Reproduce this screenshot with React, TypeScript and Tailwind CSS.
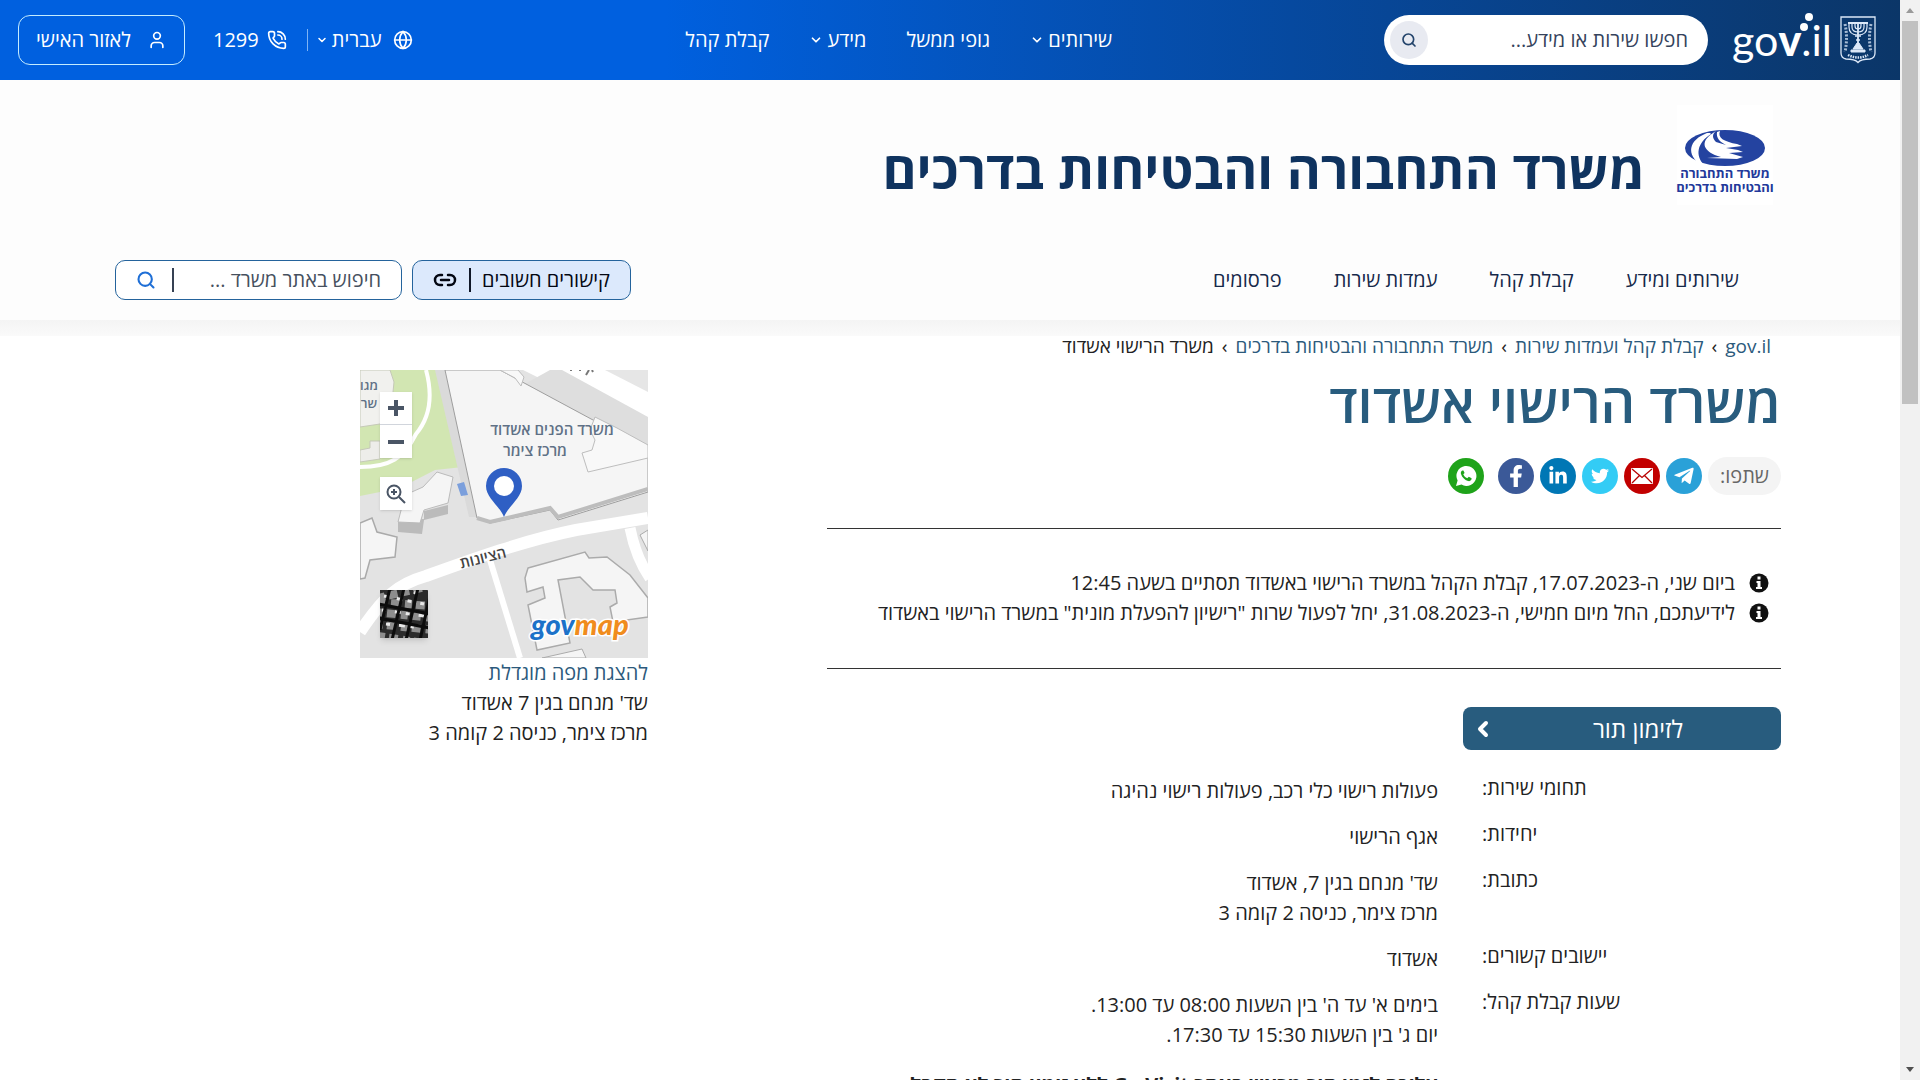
import type { ReactNode } from "react";
import { ChevronDown, ChevronLeft, Globe, Link2, PhoneCall, Search, User } from "lucide-react";
import { FaFacebookF, FaLinkedinIn, FaTelegramPlane, FaTwitter } from "react-icons/fa";
import clsx from "clsx";

const mainNav = [
  { label: "שירותים", hasMenu: true },
  { label: "גופי ממשל", hasMenu: false },
  { label: "מידע", hasMenu: true },
  { label: "קבלת קהל", hasMenu: false }
];

const officeNav = ["שירותים ומידע", "קבלת קהל", "עמדות שירות", "פרסומים"];

const breadcrumbs = ["gov.il", "קבלת קהל ועמדות שירות", "משרד התחבורה והבטיחות בדרכים"];

const notices = [
  "ביום שני, ה-17.07.2023, קבלת הקהל במשרד הרישוי באשדוד תסתיים בשעה 12:45",
  'לידיעתכם, החל מיום חמישי, ה-31.08.2023, יחל לפעול שרות "רישיון להפעלת מונית" במשרד הרישוי באשדוד'
];

const details = [
  { label: "תחומי שירות:", lines: ["פעולות רישוי כלי רכב, פעולות רישוי נהיגה"] },
  { label: "יחידות:", lines: ["אגף הרישוי"] },
  { label: "כתובת:", lines: ["שד' מנחם בגין 7, אשדוד", "מרכז צימר, כניסה 2 קומה 3"] },
  { label: "יישובים קשורים:", lines: ["אשדוד"] },
  {
    label: "שעות קבלת קהל:",
    lines: ["בימים א' עד ה' בין השעות 08:00 עד 13:00.", "יום ג' בין השעות 15:30 עד 17:30."]
  }
];

function MailIcon() {
  return (
    <svg viewBox="0 0 22 16" className="h-4 w-[22px]" fill="none" aria-hidden="true">
      <rect width="22" height="16" rx="1" fill="#fff" />
      <path d="M1 1l10 8.5L21 1M1 15l7.5-7.5M21 15l-7.5-7.5" stroke="#b80000" strokeWidth="1.3" />
    </svg>
  );
}

function WhatsappIcon() {
  return (
    <svg viewBox="0 0 24 24" className="h-6 w-6" aria-hidden="true">
      <path d="M2 22l1.600-5.400A10 10 0 1 1 7.500 20.600z" fill="#fff" />
      <path
        d="M8.500 6.500c-1.500.5-2 2-1.500 3.500 1.200 3.500 3.500 5.800 7 7 1.500.5 3-.2 3.500-1.700l.1-1-2.800-1.500-1.500 1.500c-2-.8-3.200-2-4-4l1.300-1.400-1.200-2.500z"
        fill="#1fa31a"
      />
    </svg>
  );
}

const shareLinks: { name: string; color: string; icon: ReactNode }[] = [
  { name: "טלגרם", color: "bg-[#2aa1d8]", icon: <FaTelegramPlane className="h-[22px] w-[22px]" /> },
  { name: "דואר אלקטרוני", color: "bg-[#c20000]", icon: <MailIcon /> },
  { name: "טוויטר", color: "bg-[#33ccf5]", icon: <FaTwitter className="h-[18px] w-[18px]" /> },
  { name: "לינקדאין", color: "bg-[#0077b5]", icon: <FaLinkedinIn className="h-5 w-5" /> },
  { name: "פייסבוק", color: "bg-[#3b5998]", icon: <FaFacebookF className="h-[22px] w-[22px]" /> },
  { name: "וואטסאפ", color: "bg-[#1fa31a] ms-2", icon: <WhatsappIcon /> }
];

function GovLogo() {
  return (
    <svg viewBox="0 0 100 62" className="h-[62px] w-[100px]" role="img" aria-label="gov.il">
      <g fill="#fff" fontFamily="Lato, sans-serif" fontSize="43">
        <text x="0" y="47" direction="ltr">
          go<tspan fontWeight="900">v</tspan>.il
        </text>
      </g>
      <circle cx="72" cy="18" r="4" fill="#fff" />
      <circle cx="77" cy="8" r="4" fill="#fff" />
    </svg>
  );
}

function StateEmblem() {
  return (
    <svg viewBox="0 0 36 48" className="h-12 w-9" fill="none" stroke="#dce8f8" aria-hidden="true">
      <path d="M1 1h34v36q0 5-5 6-9 0-12 3.500-3-3.500-12-3.500-5-1-5-6z" strokeWidth="1.300" />
      <path d="M9 8v3q0 8 9 8t9-8V8M12 8v3q0 5 6 5t6-5V8M15 8v2q0 3 3 3t3-3V8" strokeWidth="1.200" />
      <path d="M18 7v20M8 7h20" strokeWidth="1.800" />
      <path d="M15 20h6M16 24h4" strokeWidth="1.500" />
      <path d="M17 27l-4 6h10l-4-6zM11 34h14v2H11z" fill="#dce8f8" strokeWidth="1" />
      <path d="M5 8q3 14 0 28M31 8q-3 14 0 28" strokeWidth="3" strokeDasharray="2 1.500" opacity=".75" />
      <path d="M8 39q10 5 20 0" strokeWidth="2.500" strokeDasharray="1.500 1" />
    </svg>
  );
}

function MinistryLogo() {
  return (
    <div className="flex h-[100px] w-24 shrink-0 flex-col items-center bg-white pt-[25px] font-bold text-[#23399a]">
      <svg viewBox="0 0 80 36" className="h-9 w-20" aria-hidden="true">
        <ellipse cx="40" cy="18" rx="40" ry="18" fill="#2443a0" />
        <path
          d="M22 3C4 10 0 24 17 36l2-1C10 25 12 13 26 4l-1-1zM28 3C14 12 18 22 36 27l-14 1 30 1 6-2-14-4 14-1-5-2-12-2 16-2-5-2c-12-2-20-6-17-13l-3 1c-1 6 3 10 9 13l-10-3c-4-4-4-8 0-11z"
          fill="#fff"
        />
      </svg>
      <p className="text-center text-[13px] leading-[14px] whitespace-nowrap">
        משרד התחבורה
        <br />
        והבטיחות בדרכים
      </p>
    </div>
  );
}

function SiteHeader() {
  return (
    <header className="flex h-20 items-center justify-between bg-linear-to-l from-[#0b3668] via-[#06499f] via-32% to-[#0060df] to-65% px-[18px] text-xl text-white">
      <div className="flex items-center gap-6">
        <a href="#home" className="flex items-center gap-2 ps-1.5">
          <StateEmblem />
          <GovLogo />
        </a>
        <form className="flex h-[50px] w-[324px] items-center rounded-full bg-white ps-5 pe-1.5">
          <input
            type="search"
            aria-label="חיפוש באתר"
            placeholder="חפשו שירות או מידע..."
            className="min-w-0 flex-1 text-gray-800 outline-none placeholder:text-[#35435c]"
          />
          <button
            type="button"
            aria-label="חיפוש"
            className="grid h-[38px] w-[38px] place-items-center rounded-full bg-[#e8eaf1] text-[#24446b]"
          >
            <Search className="h-4 w-4" strokeWidth={2.5} aria-hidden="true" />
          </button>
        </form>
      </div>

      <nav aria-label="ניווט ראשי" className="flex items-center gap-10">
        {mainNav.map((item) => (
          <a key={item.label} href="#nav" className="flex items-center gap-1 font-medium whitespace-nowrap">
            {item.label}
            {item.hasMenu ? <ChevronDown className="h-3.5 w-3.5" strokeWidth={3} aria-hidden="true" /> : null}
          </a>
        ))}
      </nav>

      <div className="flex items-center font-medium">
        <button type="button" className="flex items-center">
          <Globe className="h-5 w-5" aria-hidden="true" />
          <span className="ms-3">עברית</span>
          <ChevronDown className="ms-1 h-3 w-3" strokeWidth={3} aria-hidden="true" />
        </button>
        <span className="ms-2 me-5 h-[22px] w-px bg-[#7fb4f5]" />
        <a href="tel:1299" className="flex items-center gap-2">
          <PhoneCall className="h-5 w-5" aria-hidden="true" />
          1299
        </a>
        <a
          href="#personal"
          className="ms-7 flex h-[50px] w-[167px] items-center justify-center gap-4 rounded-xl border border-[#c4ecff]"
        >
          <User className="h-5 w-5" aria-hidden="true" />
          לאזור האישי
        </a>
      </div>
    </header>
  );
}

function OfficeBanner() {
  return (
    <section className="bg-[#fdfdfd] px-[115px] pt-[25px] pb-5 text-xl text-[#16294a]">
      <div className="flex items-center gap-8 ps-3">
        <MinistryLogo />
        <p className="pt-7 text-[52px] leading-none font-bold whitespace-nowrap text-[#0f335f]">
          משרד התחבורה והבטיחות בדרכים
        </p>
      </div>
      <div className="mt-[55px] flex items-center justify-between">
        <nav aria-label="ניווט המשרד" className="flex gap-[52px] ps-[46px]">
          {officeNav.map((label) => (
            <a key={label} href="#office" className="whitespace-nowrap">
              {label}
            </a>
          ))}
        </nav>
        <div className="flex gap-2.5">
          <button
            type="button"
            className="flex h-10 w-[219px] items-center rounded-[10px] border border-[#24639c] bg-[#dce9fc] ps-5 pe-5 text-gray-950"
          >
            <span className="flex-1 text-start whitespace-nowrap">קישורים חשובים</span>
            <span className="me-3 h-6 w-0.5 bg-gray-900" />
            <Link2 className="h-6 w-6" strokeWidth={2.5} aria-hidden="true" />
          </button>
          <form className="flex h-10 w-[287px] items-center rounded-[10px] border border-[#24639c] bg-white ps-5 pe-5">
            <input
              type="search"
              aria-label="חיפוש באתר המשרד"
              placeholder="חיפוש באתר משרד ..."
              className="min-w-0 flex-1 outline-none placeholder:text-[#46505e]"
            />
            <span className="me-4 h-6 w-0.5 bg-gray-700" />
            <button type="button" aria-label="חיפוש באתר המשרד" className="text-[#1f6fd6]">
              <Search className="h-5 w-5" strokeWidth={2.5} aria-hidden="true" />
            </button>
          </form>
        </div>
      </div>
    </section>
  );
}

function OfficeMap() {
  return (
    <div className="relative h-72 w-72">
      <svg viewBox="0 0 288 288" className="h-72 w-72" role="img" aria-label="מפת משרד הרישוי אשדוד">
        <rect width="288" height="288" fill="#e3e3e3" />
        <path d="M0 0h83l20 97-28 3-35 18-40 8z" fill="#d2e6b2" />
        <path d="M0 0h30l4 12-3 30-11 12-20 3z" fill="#f1f1ee" stroke="#c5c9b8" />
        <path d="M0 80l10-2v-7h10v18l-20 3z" fill="#ededea" stroke="#c5c9b8" />
        <path d="M66 0c6 22 6 45-10 64C44 88 30 97 0 97" fill="none" stroke="#fff" strokeWidth="4" />
        <path d="M75 0h10l32 147-8 0z" fill="#dadada" />
        <path d="M163 0h125v62z" fill="#fff" />
        <path d="M190 0h12l86 47v30l-55-27-70-35z" fill="#dedede" />
        <path d="M245 0h43v22z" fill="#e6e6e6" />
        <path d="M85 0h55l93 50 55 27v45l-90 28-8-10-60 13-13-5z" fill="#f5f5f5" stroke="#9d9d9d" />
        <path d="M117 148l13 4 60-14 8 9 90-28" fill="none" stroke="#bdbdbd" strokeWidth="4" />
        <path d="M235 47l22 11 31 17v13l-60 14-6-19 10-3 3-10-5-10z" fill="#f8f8f8" stroke="#bdbdbd" />
        <path d="M140 0l15 8 6 8 3-9-6-7z" fill="#f8f8f8" stroke="#bdbdbd" />
        <path d="M210 0h2M219 0h2M226 5l3-5M232 0l1 2" stroke="#777" strokeWidth="2" />
        <path d="M38 162v-12l26-1v-8l24-6v9l-24 6-2 14z" fill="#bbb" />
        <path d="M38 152l7-27 18-8 14-15 16 5-5 26-24 7-4 13z" fill="#f5f5f5" stroke="#bbb" />
        <path d="M0 153l12-5 5 14 20 5-2 20-25 3-5 18-5 1z" fill="#f5f5f5" stroke="#aaa" strokeWidth="1.500" />
        <path d="M97 114l7-2 4 13-7 1z" fill="#7b9fdc" />
        <path d="M0 262c24-36 38-48 66-56 50-18 100-36 150-46l72-12" fill="none" stroke="#fff" strokeWidth="12" />
        <path d="M130 190l30 98" stroke="#fff" strokeWidth="6" />
        <path d="M270 158q6 30 20 50" fill="none" stroke="#fff" strokeWidth="11" />
        <path d="M288 160l-8 5 8 16z" fill="#f5f5f5" stroke="#aaa" />
        <path
          d="M168 198l57-16 4 6 18-1 23 18 18 23v19l-35 5-3-15 7-4-2-13h-22l-13-13-22 3 12 63-33 7-9-45 17-7-2-11-16 5-2-14z"
          fill="#f5f5f5"
          stroke="#ababab"
          strokeWidth="1.500"
        />
        <path d="M182 288l40-9 4 9z" fill="#f5f5f5" stroke="#ababab" />
        <path d="M144 147c-5-12-18-19-18-31a18 18 0 0 1 36 0c0 12-13 19-18 31z" fill="#2f5fc4" />
        <circle cx="144" cy="116" r="10" fill="#fff" />
        <g fill="#5f7186" fontFamily="Open Sans, sans-serif" fontSize="15" fontWeight="600" textAnchor="middle">
          <text x="192" y="65">משרד הפנים אשדוד</text>
          <text x="175" y="86">מרכז צימר</text>
          <text x="9" y="20" fontSize="13">מגו</text>
          <text x="9" y="38" fontSize="13">שר</text>
          <text x="123" y="193" fill="#444" transform="rotate(-14 123 188)">הציונות</text>
        </g>
        <g fontFamily="Lato, sans-serif" fontSize="29" fontWeight="900" fontStyle="italic" direction="ltr">
          <text x="171" y="265" stroke="#fff" strokeWidth="3" paintOrder="stroke" fill="#1c72c9">
            gov<tspan fill="#f08c1d">map</tspan>
          </text>
        </g>
      </svg>
      <div className="absolute top-[22px] left-5 flex w-8 flex-col divide-y divide-gray-300 bg-white text-gray-600 shadow">
        <button type="button" aria-label="הגדלה" className="grid h-[33px] place-items-center">
          <svg viewBox="0 0 16 16" className="h-4 w-4" stroke="currentColor" strokeWidth="4" aria-hidden="true">
            <path d="M8 0v16M0 8h16" />
          </svg>
        </button>
        <button type="button" aria-label="הקטנה" className="grid h-[33px] place-items-center">
          <span className="h-1 w-4 bg-gray-600" />
        </button>
      </div>
      <button
        type="button"
        aria-label="התמקדות"
        className="absolute top-[107px] left-5 grid h-[33px] w-8 place-items-center bg-white text-gray-600 shadow"
      >
        <svg viewBox="0 0 20 20" className="h-5 w-5" fill="none" stroke="currentColor" strokeWidth="2" aria-hidden="true">
          <circle cx="8" cy="8" r="6.500" />
          <path d="M13 13l6 6M8 5v6M5 8h6" />
        </svg>
      </button>
      <button
        type="button"
        aria-label="תצלום אוויר"
        className="absolute top-[220px] left-5 h-12 w-12 overflow-hidden bg-gray-900 shadow-md"
      >
        <svg viewBox="0 0 48 48" className="h-12 w-12" aria-hidden="true">
          <rect width="48" height="48" fill="#2b2b2b" />
          <g fill="none" stroke="#8e8e8e" strokeWidth="8" strokeDasharray="7 4 9 5">
            <path d="M-2 8l52-12M-4 22l56 6M-4 34l56 6M-2 46l52 8M0 12l50 4" />
          </g>
          <g fill="none" stroke="#e8e8e8" strokeWidth="3" strokeDasharray="4 9 6 5">
            <path d="M4 6l40 8M2 20l42 6M6 34l38 4M34 2l8 6" />
          </g>
          <path d="M24-2L12 50M38-2L26 50M10-2L0 40M50 6L40 50M-2 14l52 10M-2 28l52 10" stroke="#0c0c0c" strokeWidth="3" />
        </svg>
      </button>
    </div>
  );
}

function InfoIcon() {
  return (
    <svg viewBox="0 0 20 20" className="h-5 w-5 shrink-0" aria-hidden="true">
      <circle cx="10" cy="10" r="9.500" fill="#111" />
      <path d="M8.500 3.500h3v3h-3zM7.500 8h4v6h1.500v2h-6v-2h1.500v-4H7.500z" fill="#fff" />
    </svg>
  );
}

function PageScrollbar() {
  return (
    <div className="flex w-5 shrink-0 flex-col items-center justify-between bg-[#f1f1f1] py-2" aria-hidden="true">
      <span className="border-x-4 border-b-[5px] border-x-transparent border-b-[#9a9a9a]" />
      <span className="mt-2 mb-auto h-[36%] w-4 bg-[#c1c1c1]" />
      <span className="border-x-4 border-t-[5px] border-x-transparent border-t-[#505050]" />
    </div>
  );
}

export default function App() {
  return (
    <div className="flex h-screen overflow-hidden bg-white font-['Open_Sans','Liberation_Sans',sans-serif] text-[#222]">
      <div dir="rtl" className="min-w-0 flex-1">
        <SiteHeader />
        <OfficeBanner />
        <div className="h-4 bg-linear-to-b from-[#f4f4f4] to-[#fafafa]" />

        <div className="grid grid-cols-[954fr_708fr] px-[119px] text-xl">
          <main>
            <nav aria-label="פירורי לחם" className="flex h-5 items-center ps-2.5 text-[19px] text-[#2c5a7c]">
              {breadcrumbs.map((label) => (
                <span key={label} className="flex items-center whitespace-nowrap">
                  <a href="#crumb">{label}</a>
                  <span className="mx-2 text-[#222]">›</span>
                </span>
              ))}
              <span className="whitespace-nowrap text-[#222]">משרד הרישוי אשדוד</span>
            </nav>
            <h1 className="mt-4 text-[54px] leading-[60px] font-semibold text-[#285c7e]">משרד הרישוי אשדוד</h1>

            <div className="mt-[25px] flex h-[38px] items-center gap-1.5">
              <span className="flex h-[38px] items-center rounded-full bg-[#f4f4f4] px-3 text-[#666]">שתפו:</span>
              {shareLinks.map((link) => (
                <a
                  key={link.name}
                  href="#share"
                  aria-label={link.name}
                  className={clsx("grid h-9 w-9 place-items-center rounded-full text-white", link.color)}
                >
                  {link.icon}
                </a>
              ))}
            </div>

            <ul className="mt-[33px] border-y border-[#333] pt-[39px] pb-10">
              {notices.map((notice) => (
                <li key={notice} className="flex items-center gap-3.5 ps-3 leading-[30px] whitespace-nowrap">
                  <InfoIcon />
                  {notice}
                </li>
              ))}
            </ul>

            <button
              type="button"
              className="mt-[38px] flex h-[43px] w-1/3 items-center rounded-lg bg-[#285c7e] pe-2 text-2xl text-white"
            >
              <span className="flex-1">לזימון תור</span>
              <ChevronLeft className="h-6 w-6" strokeWidth={4} aria-hidden="true" />
            </button>

            <dl className="mt-[26px] flex flex-col gap-4">
              {details.map((row) => (
                <div key={row.label} className="flex">
                  <dt className="w-[299px] text-end leading-6">{row.label}</dt>
                  <dd className="flex-1 ps-11 leading-[30px]">
                    {row.lines.map((line) => (
                      <p key={line}>{line}</p>
                    ))}
                  </dd>
                </div>
              ))}
            </dl>
            <p className="mt-5 ps-[343px] leading-[30px] font-bold whitespace-nowrap">
              עליכם לזמן תור מראש באתר Go Visit ללא זימון תור לא תקבל
            </p>
          </main>

          <aside className="ps-[179px] pt-[34px] leading-[30px]">
            <OfficeMap />
            <a href="#map" className="block text-[#2c5a7c]">
              להצגת מפה מוגדלת
            </a>
            <p>שד' מנחם בגין 7 אשדוד</p>
            <p>מרכז צימר, כניסה 2 קומה 3</p>
          </aside>
        </div>
      </div>
      <PageScrollbar />
    </div>
  );
}
